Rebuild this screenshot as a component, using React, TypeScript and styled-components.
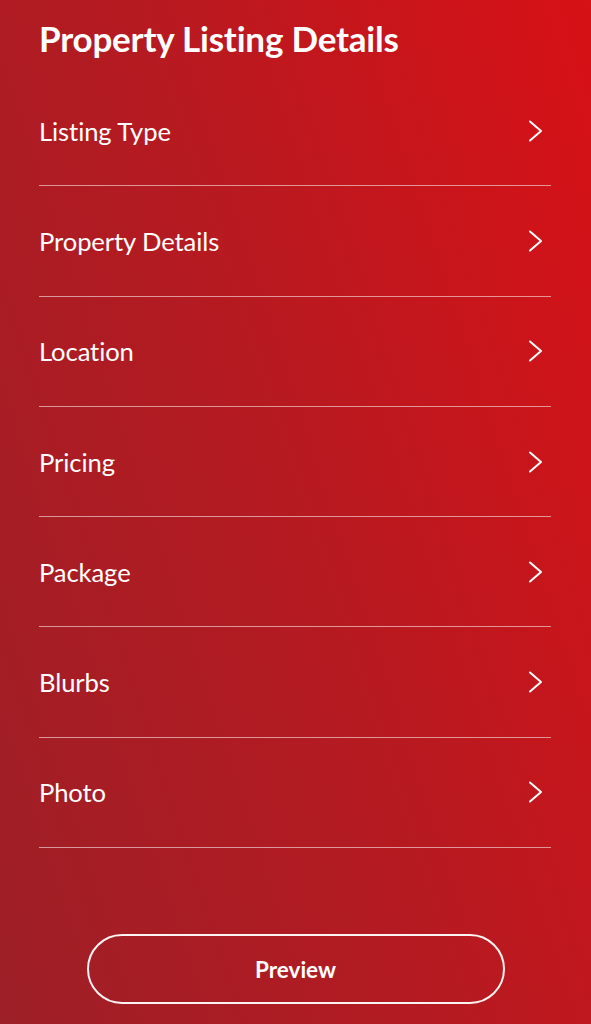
import React from "react";
import styled, { createGlobalStyle } from "styled-components";

const GlobalStyle = createGlobalStyle`
  html, body {
    margin: 0;
    padding: 0;
  }
  body {
    font-family: Lato, "Noto Sans", sans-serif;
    -webkit-font-smoothing: antialiased;
  }
`;

const sections = [
  "Listing Type",
  "Property Details",
  "Location",
  "Pricing",
  "Package",
  "Blurbs",
  "Photo",
];

const Page = styled.div`
  width: 591px;
  height: 1024px;
  box-sizing: border-box;
  padding: 18px 40px 0 39px;
  display: flex;
  flex-direction: column;
  background: linear-gradient(72deg, #9d1f27 0%, #b61a21 50%, #d71116 100%);
  color: #ffffff;
  overflow: hidden;
`;

const Title = styled.h1`
  margin: 0;
  font-size: 35px;
  line-height: 40px;
  font-weight: 700;
  letter-spacing: -0.2px;
`;

const List = styled.ul`
  list-style: none;
  margin: 18px 0 0;
  padding: 0;
`;

const Row = styled.li`
  height: 110.3px;
  box-sizing: border-box;
  display: flex;
  align-items: center;
  justify-content: space-between;
  border-bottom: 1px solid rgba(255, 255, 255, 0.55);
  cursor: pointer;
`;

const Label = styled.span`
  font-size: 25.6px;
  font-weight: 400;
  letter-spacing: -0.1px;
`;

const Chevron = styled.svg`
  width: 16px;
  height: 24px;
  margin-right: 8px;
  flex-shrink: 0;
`;

const Footer = styled.div`
  flex: 1;
  display: flex;
  align-items: flex-start;
  justify-content: center;
  padding-top: 86px;
  padding-left: 1px;
`;

const PreviewButton = styled.button`
  width: 418px;
  height: 70px;
  border: 2px solid rgba(255, 255, 255, 0.95);
  border-radius: 35px;
  background: transparent;
  color: #ffffff;
  font-family: inherit;
  font-size: 22.5px;
  font-weight: 700;
  cursor: pointer;
`;

function ChevronRight() {
  return (
    <Chevron viewBox="0 0 16 24" fill="none">
      <path
        d="M3 2.5 L14 12 L3 21.5"
        stroke="#ffffff"
        strokeWidth="2"
        strokeLinecap="round"
        strokeLinejoin="round"
      />
    </Chevron>
  );
}

export default function App() {
  return (
    <>
      <GlobalStyle />
      <Page>
        <Title>Property Listing Details</Title>
        <List>
          {sections.map((s) => (
            <Row key={s}>
              <Label>{s}</Label>
              <ChevronRight />
            </Row>
          ))}
        </List>
        <Footer>
          <PreviewButton>Preview</PreviewButton>
        </Footer>
      </Page>
    </>
  );
}
